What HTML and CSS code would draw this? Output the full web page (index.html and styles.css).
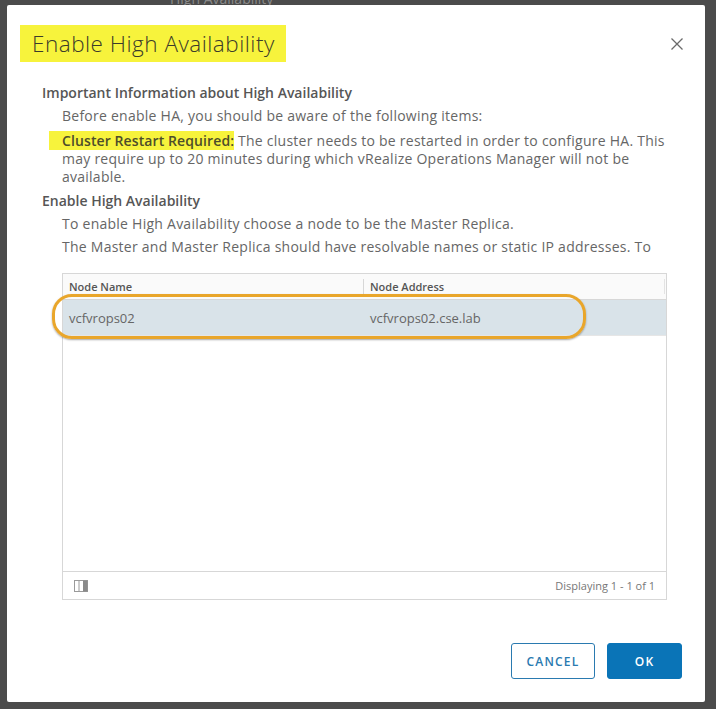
FILE: index.html
```html
<!DOCTYPE html>
<html>
<head>
<meta charset="utf-8">
<link rel="stylesheet" href="styles.css">
</head>
<body>
<div class="backdrop-text">High Availability</div>
<div class="dialog">
  <div class="header">
    <div class="title">Enable High Availability</div>
    <button class="close" aria-label="Close">
      <svg width="14" height="14" viewBox="0 0 14 14"><path d="M1.5 1.5 L12.5 12.5 M12.5 1.5 L1.5 12.5" stroke="#6a6a6a" stroke-width="1.3" fill="none"/></svg>
    </button>
  </div>
  <div class="body">
    <h3 class="section">Important Information about High Availability</h3>
    <div class="indent">
      <p class="line">Before enable HA, you should be aware of the following items:</p>
      <p class="note"><span class="mark">Cluster Restart Required:</span> The cluster needs to be restarted in order to configure HA. This may require up to 20 minutes during which vRealize Operations Manager will not be available.</p>
    </div>
    <h3 class="section s2">Enable High Availability</h3>
    <div class="indent">
      <p class="line">To enable High Availability choose a node to be the Master Replica.</p>
      <p class="line l2">The Master and Master Replica should have resolvable names or static IP addresses. To</p>
      <div class="grid">
        <div class="grid-head">
          <div class="col c1">Node Name</div>
          <div class="col c2">Node Address</div>
        </div>
        <div class="grid-row selected">
          <div class="col c1">vcfvrops02</div>
          <div class="col c2">vcfvrops02.cse.lab</div>
        </div>
        <div class="grid-fill"></div>
        <div class="grid-foot">
          <svg class="colicon" width="14" height="12" viewBox="0 0 14 12"><rect x="0.5" y="0.5" width="13" height="11" fill="#fff" stroke="#9a9a9a"/><line x1="5" y1="0.5" x2="5" y2="11.5" stroke="#9a9a9a"/><rect x="9" y="0.5" width="4.5" height="11" fill="#8a8a8a"/></svg>
          <span class="count">Displaying 1 - 1 of 1</span>
        </div>
        <div class="ring"></div>
      </div>
    </div>
  </div>
  <div class="footer">
    <button class="btn btn-outline">CANCEL</button>
    <button class="btn btn-primary">OK</button>
  </div>
</div>
</body>
</html>
```

FILE: styles.css
```css
html, body {
  margin: 0;
  padding: 0;
}
body {
  background: #4b4b4b;
  width: 716px;
  height: 709px;
  overflow: hidden;
  position: relative;
  font-family: "Open Sans", "Lato", sans-serif;
}
.backdrop-text {
  position: absolute;
  left: 170px;
  top: -11px;
  font-size: 14px;
  color: #8a8a8a;
}
.dialog {
  position: relative;
  margin: 5px 0 0 7px;
  width: 698px;
  height: 697px;
  background: #fff;
  border-radius: 2px;
  display: flex;
  flex-direction: column;
  box-sizing: border-box;
  padding-top: 20px;
}
.header {
  display: flex;
  justify-content: space-between;
  align-items: center;
  padding: 0 21px 0 13px;
}
.title {
  background: #f7f33c;
  height: 37px;
  line-height: 37px;
  padding: 0 11px 0 12px;
  font-size: 22.5px;
  font-weight: 300;
  color: #3b3b2a;
  letter-spacing: 0.5px;
}
.close {
  background: none;
  border: none;
  padding: 0;
  width: 14px;
  height: 14px;
  display: flex;
}
.body {
  padding: 22px 0 0 35px;
  flex: 1;
}
.section {
  margin: 0;
  font-size: 14px;
  line-height: 18px;
  font-weight: 600;
  color: #565656;
}
.s2 {
  margin-top: 6px;
}
.indent {
  padding-left: 20px;
}
.line {
  margin: 5px 0 0;
  font-size: 14px;
  line-height: 18px;
  color: #666;
  letter-spacing: 0.25px;
}
.l2 {
  margin-top: 5px;
}
.note {
  margin: 7px 0 0;
  font-size: 14px;
  line-height: 18px;
  color: #666;
  width: 620px;
  letter-spacing: 0.25px;
}
.mark {
  background: #f7f33c;
  box-shadow: -13px 0 0 #f7f33c;
  font-weight: 600;
  color: #4d4d2a;
  letter-spacing: 0.1px;
}
.grid {
  position: relative;
  margin-top: 17px;
  width: 605px;
  height: 327px;
  border: 1px solid #d7d7d7;
  box-sizing: border-box;
  display: flex;
  flex-direction: column;
  font-size: 13px;
}
.grid-head {
  display: flex;
  height: 25px;
  background: #fafafa;
  border-bottom: 1px solid #d7d7d7;
  font-size: 11px;
  font-weight: 600;
  color: #555;
  align-items: center;
}
.col {
  box-sizing: border-box;
  padding-left: 6px;
}
.c1 {
  width: 300px;
}
.c2 {
  flex: 1;
}
.grid-head .c2 {
  border-left: 1px solid #d7d7d7;
  height: 15px;
  line-height: 15px;
  border-right: 1px solid #e3e3e3;
  margin-right: 1px;
}
.grid-head .c1 {
  line-height: 15px;
}
.grid-row {
  display: flex;
  height: 35px;
  align-items: center;
  color: #666;
  font-size: 13px;
  border-bottom: 1px solid #e6e6e6;
}
.grid-row .c2 {
  padding-left: 7px;
}
.selected {
  background: #d9e3e9;
}
.grid-fill {
  flex: 1;
}
.grid-foot {
  height: 28px;
  border-top: 1px solid #d7d7d7;
  display: flex;
  align-items: center;
  justify-content: space-between;
  padding: 0 11px 0 11px;
  box-sizing: border-box;
}
.colicon {
  display: block;
}
.count {
  font-size: 11px;
  color: #777;
}
.ring {
  position: absolute;
  left: -11px;
  top: 20px;
  width: 534px;
  height: 45px;
  box-sizing: border-box;
  border: 3px solid #e9a62b;
  border-radius: 20px;
  box-shadow: 0 1px 2px rgba(0, 0, 0, 0.35);
}
.footer {
  display: flex;
  justify-content: flex-end;
  gap: 12px;
  padding: 0 23px 23px 0;
}
.btn {
  height: 36px;
  font-family: "Open Sans", "Lato", sans-serif;
  font-size: 12px;
  font-weight: 600;
  letter-spacing: 1.2px;
  border-radius: 3px;
  box-sizing: border-box;
}
.btn-outline {
  width: 84px;
  background: #fff;
  color: #2a7ab0;
  border: 1px solid #2a7ab0;
}
.btn-primary {
  width: 75px;
  background: #0a74b7;
  color: #fff;
  border: 1px solid #0a74b7;
}
```
